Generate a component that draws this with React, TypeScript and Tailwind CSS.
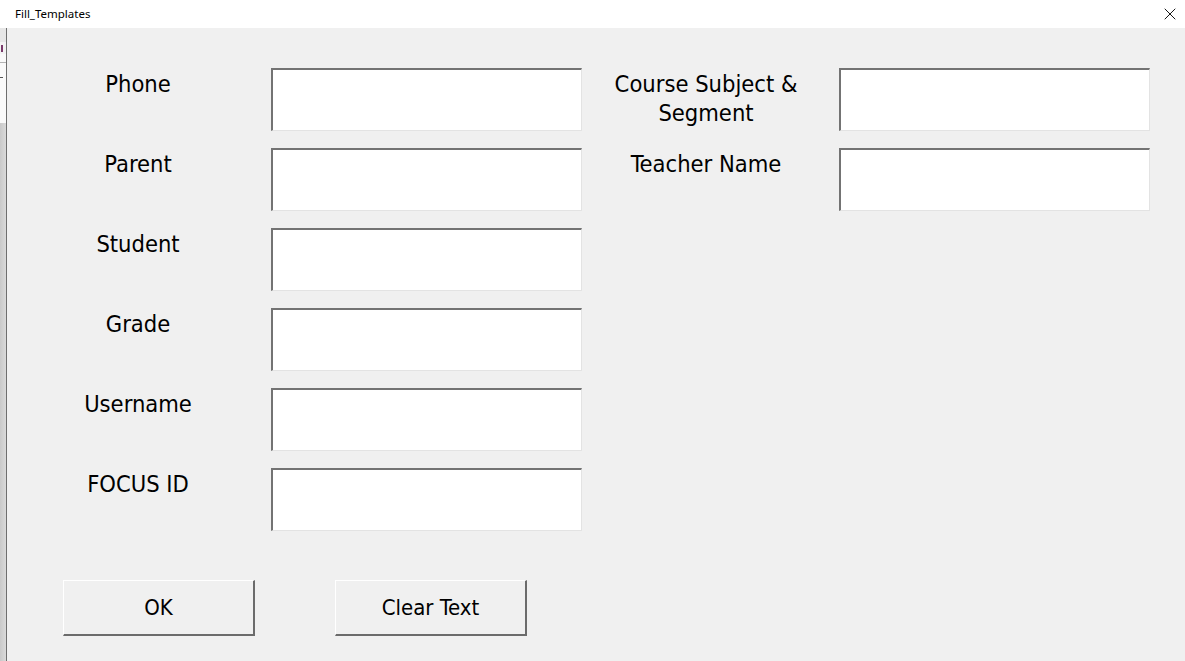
import { X } from "lucide-react";

const leftFields = ["Phone", "Parent", "Student", "Grade", "Username", "FOCUS ID"];
const rightFields = ["Course Subject & Segment", "Teacher Name"];

function TextBox() {
  return (
    <div className="h-[63px] w-[311px] shrink-0 border-l-2 border-t-2 border-b border-r border-l-[#737373] border-t-[#737373] border-b-[#e3e3e3] border-r-[#e3e3e3] bg-white" />
  );
}

function FieldRow({ label, labelWidth }: { label: string; labelWidth: number }) {
  return (
    <div className="flex h-[63px] items-start pt-[2px]">
      <div
        className="shrink-0 text-center text-[23.5px] leading-[29px] text-black"
        style={{ width: labelWidth }}
      >
        {label}
      </div>
    </div>
  );
}

function Button({ children }: { children: React.ReactNode }) {
  return (
    <button className="flex h-[56px] w-[192px] items-center justify-center border-l border-t border-b-2 border-r-2 border-l-white border-t-white border-b-[#6b6b6b] border-r-[#6b6b6b] bg-[#f0f0f0] text-[22px] text-black">
      {children}
    </button>
  );
}

export default function App() {
  return (
    <div
      className="flex h-[661px] w-[1185px] flex-col overflow-hidden bg-[#f0f0f0]"
      style={{ fontFamily: '"DejaVu Sans Condensed", "Liberation Sans", Arial, sans-serif' }}
    >
      {/* title bar */}
      <div className="flex h-[28px] shrink-0 items-center justify-between bg-white pl-[15px] pr-[5px]">
        <span
          className="text-[11.5px] text-black"
          style={{ fontFamily: '"Noto Sans", "Open Sans", sans-serif' }}
        >
          Fill_Templates
        </span>
        <X className="h-[20px] w-[20px] text-black" strokeWidth={1.1} />
      </div>

      <div className="flex flex-1">
        {/* sliver of the window behind */}
        <div className="flex w-[6px] shrink-0 flex-col">
          <div className="h-[14px] bg-[#e6e6e6]" />
          <div className="h-[12px] bg-[#f3f3f3]">
            <div className="ml-[1px] mt-[3px] h-[7px] w-[2px] bg-[#7a3b6b]" />
          </div>
          <div className="h-[8px] bg-[#fafafa]" />
          <div className="h-[1px] bg-[#b4b4b4]" />
          <div className="h-[60px] bg-[#fafafa]">
            <div className="mt-[14px] h-[1px] w-[3px] bg-[#555]" />
          </div>
          <div className="flex-1 bg-gradient-to-r from-[#c9c9c9] to-[#dadada]" />
        </div>
        <div className="w-[1px] shrink-0 bg-[#6e6e6e]" />

        {/* form */}
        <div className="flex flex-1 flex-col pl-[33px] pt-[40px]">
          <div className="flex">
            <div className="flex flex-col gap-[17px]">
              {leftFields.map((f) => (
                <div key={f} className="flex gap-[35px]">
                  <FieldRow label={f} labelWidth={196} />
                  <TextBox />
                </div>
              ))}
            </div>
            <div className="ml-[18px] flex flex-col gap-[17px]">
              {rightFields.map((f) => (
                <div key={f} className="flex gap-[27px]">
                  <FieldRow label={f} labelWidth={212} />
                  <TextBox />
                </div>
              ))}
            </div>
          </div>

          <div className="mt-[49px] flex gap-[80px] pl-[23px]">
            <Button>OK</Button>
            <Button>Clear Text</Button>
          </div>
        </div>
      </div>
    </div>
  );
}
